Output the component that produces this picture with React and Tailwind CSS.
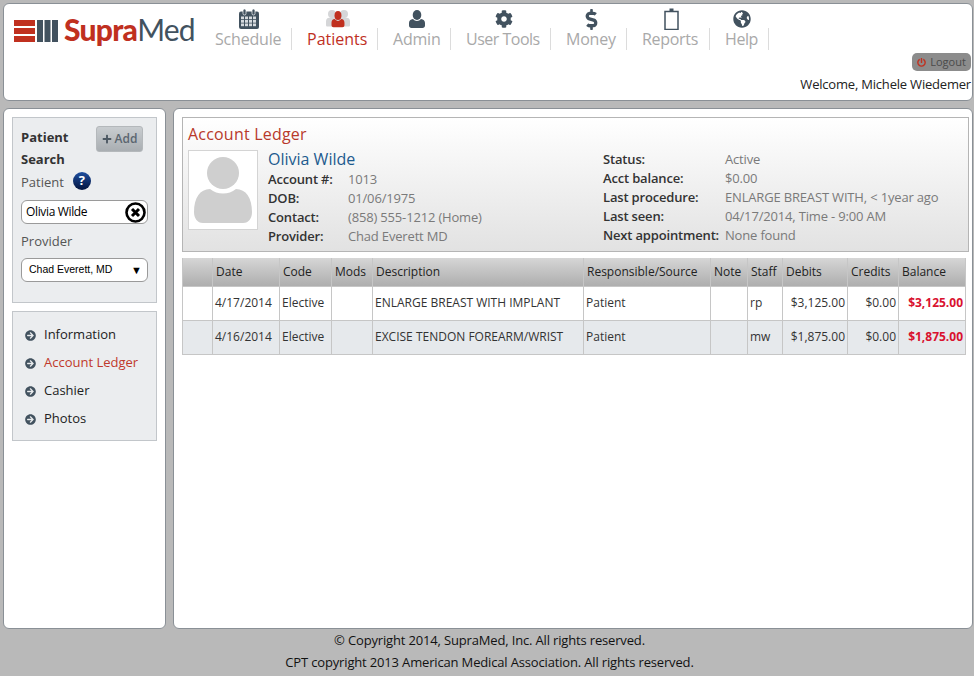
import React from "react";
import {
  FaCog,
  FaDollarSign,
  FaGlobeAmericas,
  FaArrowCircleRight,
  FaPlus,
  FaPowerOff,
} from "react-icons/fa";

const SLATE = "#42525f";

const CalendarIcon = () => (
  <svg width="20" height="20" viewBox="0 0 20 20">
    <rect x="0" y="2.500" width="20" height="17.500" rx="2" fill={SLATE} />
    <rect x="4" y="0" width="3" height="6" rx="1.500" fill={SLATE} stroke="white" strokeWidth="0.700" />
    <rect x="13" y="0" width="3" height="6" rx="1.500" fill={SLATE} stroke="white" strokeWidth="0.700" />
    <g fill="#d6dade">
      {[2, 6, 10, 14].map((x) =>
        [7.5, 11, 14.5].map((y) => <rect key={`${x}-${y}`} x={x} y={y} width="3" height="2.700" />)
      )}
    </g>
  </svg>
);

const PersonShape = ({ fill }) => (
  <>
    <ellipse cx="8" cy="5" rx="4.300" ry="5" fill={fill} />
    <path d="M0 15.500v-2.500c0-2.300 1.500-3.800 4-4 1 1.300 2.400 2 4 2s3-.7 4-2c2.500.2 4 1.700 4 4v2.500c0 1.500-1 2.500-2.500 2.500h-11C1 18 0 17 0 15.500z" fill={fill} />
  </>
);

const AdminIcon = () => (
  <svg width="16" height="18" viewBox="0 0 16 18">
    <PersonShape fill={SLATE} />
  </svg>
);

const PatientsIcon = () => (
  <svg width="24" height="18" viewBox="0 0 24 18">
    <g fill="#d5d6d8">
      <circle cx="6" cy="4" r="4" />
      <circle cx="18" cy="4" r="4" />
      <path d="M0 15v-4c0-2.500 2-3.500 5-3.500h14c3 0 5 1 5 3.500v4c0 1-.5 1.500-1.500 1.500h-21C.5 16.500 0 16 0 15z" />
    </g>
    <g transform="translate(5.500 1) scale(0.81 0.9)">
      <PersonShape fill="#c0301f" />
    </g>
  </svg>
);

const ReportsIcon = () => (
  <svg width="15" height="22" viewBox="0 0 15 22">
    <rect x="1" y="3.500" width="13" height="18" fill="none" stroke={SLATE} strokeWidth="1.500" />
    <rect x="5.500" y="0.500" width="4" height="3.500" fill={SLATE} />
  </svg>
);

const navItems = [
  { label: "Schedule", icon: <CalendarIcon />, width: "w-[92px]", track: "tracking-[-0.2px]" },
  { label: "Patients", icon: <PatientsIcon />, active: true, width: "w-[86px]", track: "" },
  { label: "Admin", icon: <AdminIcon />, width: "w-[73px]", track: "tracking-[-0.2px]" },
  { label: "User Tools", icon: <FaCog size={18} color={SLATE} />, width: "w-[100px]", track: "tracking-[-0.5px]" },
  { label: "Money", icon: <FaDollarSign size={21} color={SLATE} />, width: "w-[76px]", track: "tracking-[-0.2px]" },
  { label: "Reports", icon: <ReportsIcon />, width: "w-[83px]", track: "tracking-[-0.3px]" },
  { label: "Help", icon: <FaGlobeAmericas size={18} color={SLATE} />, width: "w-[59px]", track: "tracking-[-0.4px]" },
];

const leftInfo = [
  ["Account #:", "1013"],
  ["DOB:", "01/06/1975"],
  ["Contact:", "(858) 555-1212 (Home)"],
  ["Provider:", "Chad Everett MD"],
];

const rightInfo = [
  ["Status:", "Active"],
  ["Acct balance:", "$0.00"],
  ["Last procedure:", "ENLARGE BREAST WITH, < 1year ago"],
  ["Last seen:", "04/17/2014, Time - 9:00 AM"],
  ["Next appointment:", "None found"],
];

const columns = [
  ["", 30],
  ["Date", 67],
  ["Code", 52],
  ["Mods", 41],
  ["Description", 211],
  ["Responsible/Source", 127],
  ["Note", 37],
  ["Staff", 35],
  ["Debits", 65],
  ["Credits", 51],
  ["Balance", 67],
];

const rows = [
  { date: "4/17/2014", desc: "ENLARGE BREAST WITH IMPLANT", staff: "rp", debit: "$3,125.00", bal: "$3,125.00", bg: "bg-white" },
  { date: "4/16/2014", desc: "EXCISE TENDON FOREARM/WRIST", staff: "mw", debit: "$1,875.00", bal: "$1,875.00", bg: "bg-[#e6e9ec]" },
];

const sideLinks = ["Information", "Account Ledger", "Cashier", "Photos"];

const InfoRows = ({ items, labelWidth }) => (
  <div className="flex flex-col">
    {items.map(([label, value]) => (
      <div key={label} className="flex h-[19px] items-center text-[13px] tracking-[-0.17px]">
        <span className={`font-semibold text-[#333] ${labelWidth}`}>{label}</span>
        <span className="text-[#7a7a7a]">{value}</span>
      </div>
    ))}
  </div>
);

export default function App() {
  return (
    <div
      className="flex h-[676px] w-[974px] flex-col overflow-hidden bg-[#b9b9b9] pt-[3px] pl-[3px] pr-[1px]"
      style={{ fontFamily: '"Open Sans", sans-serif' }}
    >
      {/* header */}
      <header className="relative flex h-[98px] shrink-0 items-start rounded-[6px] border border-[#8a9096] bg-white">
        <div className="mt-[7px] ml-[10px] flex w-[186px] items-center">
          <svg width="45" height="22" viewBox="0 0 45 22" className="mt-[4px]">
            <g fill="#c0301f">
              <rect x="0" y="0" width="21" height="6" />
              <rect x="0" y="8" width="21" height="6" />
              <rect x="0" y="16" width="21" height="6" />
            </g>
            <g fill={SLATE}>
              <rect x="23" y="0" width="6" height="22" />
              <rect x="30.500" y="0" width="6" height="22" />
              <rect x="38" y="0" width="6" height="22" />
            </g>
          </svg>
          <span className="ml-[5px] text-[30px] leading-[36px] tracking-[-0.75px]" style={{ fontFamily: "Lato, sans-serif" }}>
            <span className="font-black text-[#c0301f]">Supra</span>
            <span className="text-[#42525f]">Med</span>
          </span>
        </div>

        <nav className="flex pt-[3px] -ml-[0px]">
          {navItems.map((item) => (
            <div key={item.label} className={`flex flex-col ${item.width}`}>
              <div className="flex h-[24px] items-center justify-center pr-[10px] pl-[15px]">{item.icon}</div>
              <div
                className={`-mt-[3px] h-[22px] border-r border-[#dcdcdc] pl-[15px] text-[16px] leading-[22px] whitespace-nowrap ${item.track} ${
                  item.active ? "text-[#c0301f]" : "text-[#a9a9a9]"
                }`}
              >
                {item.label}
              </div>
            </div>
          ))}
        </nav>

        <div className="absolute top-[49px] right-[1px] flex flex-col items-end">
          <button className="flex h-[18px] w-[59px] items-center justify-center gap-[4px] rounded-[5px] bg-[#8c8c8c] text-[11px] text-[#4a4a4a]">
            <FaPowerOff size={9} color="#c0301f" />
            Logout
          </button>
          <div className="mt-[4px] text-[13px] leading-[18px] tracking-[-0.2px] text-[#222]">Welcome, Michele Wiedemer</div>
        </div>
      </header>

      {/* body */}
      <div className="mt-[7px] flex h-[521px] shrink-0 gap-[7px]">
        <aside className="w-[163px] shrink-0 rounded-[6px] border border-[#8a9096] bg-white pt-[8px] pl-[8px]">
          <div className="h-[186px] w-[145px] border border-[#c2c6ca] bg-[#ebedef] pt-[8px] pl-[8px]">
            <div className="flex items-start">
              <div className="w-[75px] text-[13px] font-bold leading-[22px] text-[#333]">Patient Search</div>
              <button className="flex h-[26px] w-[47px] items-center justify-center gap-[3px] rounded-[3px] border border-[#b4b8bb] bg-gradient-to-b from-[#c9cdd0] to-[#a9aeb2] text-[12px] font-semibold text-[#5b6670]">
                <FaPlus size={10} color="#4c5862" />
                Add
              </button>
            </div>
            <div className="flex h-[22px] items-center text-[13px] text-[#555]">
              <span className="pt-[3px]">Patient</span>
              <span className="ml-[9px] flex h-[18px] w-[18px] items-center justify-center rounded-full bg-gradient-to-b from-[#1f4fa0] to-[#04143f] text-[13px] font-bold text-white">
                ?
              </span>
            </div>
            <div className="mt-[8px] flex h-[24px] w-[127px] items-center justify-between rounded-[6px] border border-[#9a9a9a] bg-white pr-[1px] pl-[4px]">
              <input
                readOnly
                value="Olivia Wilde"
                className="w-[90px] bg-transparent text-[12px] tracking-[-0.35px] text-black outline-none"
              />
              <svg width="21" height="21" viewBox="0 0 21 21">
                <circle cx="10.500" cy="10.500" r="9" fill="white" stroke="black" strokeWidth="2.600" />
                <path d="M7 7l7 7M14 7l-7 7" stroke="black" strokeWidth="3" />
              </svg>
            </div>
            <div className="mt-[6px] h-[22px] text-[13px] leading-[22px] text-[#555]">Provider</div>
            <div className="mt-[6px] flex h-[24px] w-[127px] items-center justify-between rounded-[6px] border border-[#9a9a9a] bg-white pr-[5px] pl-[7px] text-[10.500px] text-black" style={{ fontFamily: '"Liberation Sans", sans-serif' }}>
              <span>Chad Everett, MD</span>
              <span className="text-[11px]">▼</span>
            </div>
          </div>

          <div className="mt-[8px] h-[130px] w-[145px] border border-[#c2c6ca] bg-[#ebedef] pt-[9px] pl-[12px]">
            {sideLinks.map((link) => (
              <div key={link} className="flex h-[28px] items-center gap-[8px] text-[13px]">
                <FaArrowCircleRight size={11} color="#42525f" />
                <span className={link === "Account Ledger" ? "text-[#c0392b]" : "text-[#222]"}>{link}</span>
              </div>
            ))}
          </div>
        </aside>

        <main className="flex-1 rounded-[6px] border border-[#8a9096] bg-white pt-[8px] pl-[8px]">
          <section className="h-[135px] w-[787px] border border-[#b5b5b5] bg-gradient-to-b from-white to-[#e2e2e2] pt-[4px] pl-[5px]">
            <h1 className="h-[28px] text-[16px] leading-[24px] tracking-[0.2px] text-[#b8392b]">Account Ledger</h1>
            <div className="flex">
              <div className="flex h-[80px] w-[70px] shrink-0 items-end justify-center border border-[#d4d4d4] bg-white pb-[6px]">
                <svg width="58" height="66" viewBox="0 0 58 66">
                  <circle cx="29" cy="16" r="16" fill="#cfcfcf" />
                  <path d="M0 55c0-14 6-23 16-23 4 3 8 4.500 13 4.500s9-1.500 13-4.500c10 0 16 9 16 23 0 6-3 11-9 11H9c-6 0-9-5-9-11z" fill="#cfcfcf" />
                </svg>
              </div>
              <div className="ml-[10px] w-[335px]">
                <div className="h-[20px] text-[16px] leading-[19px] text-[#1d5a8e]">Olivia Wilde</div>
                <InfoRows items={leftInfo} labelWidth="w-[80px]" />
              </div>
              <div>
                <InfoRows items={rightInfo} labelWidth="w-[122px]" />
              </div>
            </div>
          </section>

          <table className="mt-[6px] w-[783px] table-fixed border-collapse text-[12px] text-[#333]">
            <colgroup>
              {columns.map(([name, width]) => (
                <col key={name || "blank"} style={{ width }} />
              ))}
            </colgroup>
            <thead>
              <tr className="h-[28px] bg-gradient-to-b from-[#d6d6d6] to-[#aeaeae]">
                {columns.map(([name]) => (
                  <th
                    key={name || "blank"}
                    className="border-x border-[#c6c6c6] px-[3px] text-left font-normal text-[#222]"
                  >
                    {name}
                  </th>
                ))}
              </tr>
            </thead>
            <tbody>
              {rows.map((row) => (
                <tr key={row.date} className={`h-[34px] ${row.bg}`}>
                  <td className="border border-[#c6c6c6]" />
                  <td className="border border-[#c6c6c6] px-[2px]">{row.date}</td>
                  <td className="border border-[#c6c6c6] px-[2px]">Elective</td>
                  <td className="border border-[#c6c6c6]" />
                  <td className="border border-[#c6c6c6] px-[2px]">{row.desc}</td>
                  <td className="border border-[#c6c6c6] px-[2px]">Patient</td>
                  <td className="border border-[#c6c6c6]" />
                  <td className="border border-[#c6c6c6] px-[2px]">{row.staff}</td>
                  <td className="border border-[#c6c6c6] px-[2px] text-right">{row.debit}</td>
                  <td className="border border-[#c6c6c6] px-[2px] text-right">$0.00</td>
                  <td className="border border-[#c6c6c6] px-[2px] text-right font-bold text-[#d9122f]">{row.bal}</td>
                </tr>
              ))}
            </tbody>
          </table>
        </main>
      </div>

      {/* footer */}
      <footer className="pl-[3px] text-center text-[13px] leading-[22px] tracking-[-0.16px] text-[#111]">
        <div>© Copyright 2014, SupraMed, Inc. All rights reserved.</div>
        <div>CPT copyright 2013 American Medical Association. All rights reserved.</div>
      </footer>
    </div>
  );
}
